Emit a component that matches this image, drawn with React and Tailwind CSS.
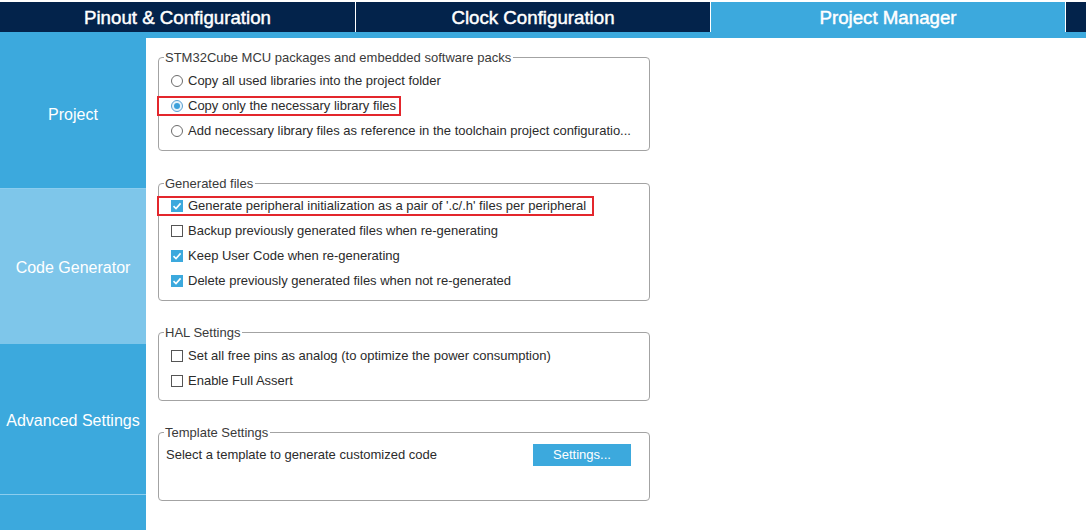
import React from "react";

const Radio = ({ checked }) => (
  <svg width="12" height="12" viewBox="0 0 12 12" className="shrink-0">
    <circle cx="6" cy="6" r="5.5" fill={checked ? "#e6f3fb" : "#fff"} stroke={checked ? "#5a9fd0" : "#6b6b6b"} />
    {checked && <circle cx="6" cy="6" r="3" fill="#3ca0db" />}
  </svg>
);

const Check = ({ checked }) =>
  checked ? (
    <svg width="12" height="12" viewBox="0 0 12 12" className="shrink-0">
      <rect x="0" y="0" width="12" height="12" fill="#3ca9dd" />
      <path d="M2.5 6.2 L5 8.6 L9.6 3.4" fill="none" stroke="#fff" strokeWidth="1.6" />
    </svg>
  ) : (
    <svg width="12" height="12" viewBox="0 0 12 12" className="shrink-0">
      <rect x="0.5" y="0.5" width="11" height="11" fill="#fff" stroke="#555" />
    </svg>
  );

const Row = ({ icon, label, highlight, pr = "pr-[3px]" }) => (
  <div className="flex items-center h-[25px]">
    {highlight ? (
      <span className={`flex items-center gap-[5px] h-[20px] border-2 border-[#e3262c] -ml-[14px] pl-[12px] ${pr}`}>
        {icon}
        <span className="whitespace-nowrap">{label}</span>
      </span>
    ) : (
      <span className="flex items-center gap-[5px]">
        {icon}
        <span className="whitespace-nowrap">{label}</span>
      </span>
    )}
  </div>
);

const Group = ({ title, children, className = "" }) => (
  <fieldset className={`w-[492px] border border-[#a3a3a3] rounded-[4px] px-[12px] ${className}`}>
    <legend className="-ml-[7px] pl-px pr-[2px] leading-[15px] text-[#3a3a3a]">{title}</legend>
    {children}
  </fieldset>
);

const SideItem = ({ label, className }) => (
  <div className={`flex items-center justify-center pt-[3px] text-white text-[16px] ${className}`}>{label}</div>
);

export default function App() {
  return (
    <div className="w-[1086px] h-[530px] bg-white overflow-hidden font-['Liberation_Sans',Arial,sans-serif]">
      <div className="h-[2px]" />
      {/* tab bar */}
      <div className="flex h-[30px] bg-[#03234b] text-white text-[18.7px] [-webkit-text-stroke:0.45px_white]">
        <div className="w-[356px] border-r border-white flex items-center justify-center pt-[2px]">Pinout &amp; Configuration</div>
        <div className="w-[355px] border-r border-white flex items-center justify-center pt-[2px]">Clock Configuration</div>
        <div className="w-[355px] border-r border-white bg-[#3ca9dd] flex items-center justify-center pt-[2px]">Project Manager</div>
        <div className="flex-1" />
      </div>
      <div className="h-[6px] bg-[#3ca9dd]" />

      <div className="flex h-[492px]">
        {/* sidebar */}
        <div className="w-[146px] flex flex-col bg-[#3ca9dd]">
          <SideItem label="Project" className="h-[151px] border-b border-[#8ccdee]" />
          <SideItem label="Code Generator" className="h-[155px] bg-[#7ec6ea]" />
          <SideItem label="Advanced Settings" className="h-[151px] border-b border-[#8ccdee]" />
          <div className="flex-1" />
        </div>

        {/* content */}
        <div className="flex-1 pl-[12px] pt-[12px] text-[13px] text-[#2b2b2b]">
          <Group title="STM32Cube MCU packages and embedded software packs" className="pt-[3px] pb-[7px]">
            <Row icon={<Radio />} label="Copy all used libraries into the project folder" />
            <Row icon={<Radio checked />} label="Copy only the necessary library files" highlight />
            <Row icon={<Radio />} label="Add necessary library files as reference in the toolchain project configuratio..." />
          </Group>

          <Group title="Generated files" className="mt-[25px] pt-[2px] pb-[7px]">
            <Row icon={<Check checked />} label="Generate peripheral initialization as a pair of '.c/.h' files per peripheral" highlight pr="pr-[6px]" />
            <Row icon={<Check />} label="Backup previously generated files when re-generating" />
            <Row icon={<Check checked />} label="Keep User Code when re-generating" />
            <Row icon={<Check checked />} label="Delete previously generated files when not re-generated" />
          </Group>

          <Group title="HAL Settings" className="mt-[24px] pt-[3px] pb-[7px]">
            <Row icon={<Check />} label="Set all free pins as analog (to optimize the power consumption)" />
            <Row icon={<Check />} label="Enable Full Assert" />
          </Group>

          <Group title="Template Settings" className="mt-[24px] pt-[2px] pb-[33px]">
            <div className="flex items-center h-[25px] -ml-[5px]">
              <span>Select a template to generate customized code</span>
              <button className="ml-auto mr-[6px] w-[98px] h-[22px] bg-[#3ca9dd] text-white text-[13px]">Settings...</button>
            </div>
          </Group>
        </div>
      </div>
    </div>
  );
}
